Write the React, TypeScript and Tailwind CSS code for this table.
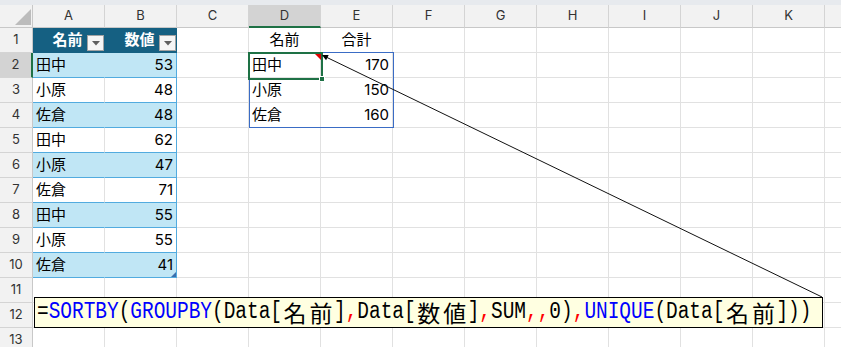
import React from "react";

const cols = ["A", "B", "C", "D", "E", "F", "G", "H", "I", "J", "K"];

const data: [string, number][] = [
  ["田中", 53],
  ["小原", 48],
  ["佐倉", 48],
  ["田中", 62],
  ["小原", 47],
  ["佐倉", 71],
  ["田中", 55],
  ["小原", 55],
  ["佐倉", 41],
];

const summary: [string, number][] = [
  ["田中", 170],
  ["小原", 150],
  ["佐倉", 160],
];

const cellBase =
  "relative flex items-center px-[3px] border-r border-b border-[#e1e1e1] text-[15px] text-black whitespace-nowrap overflow-hidden";

type Seg = { t: string; c: "k" | "b" | "r" };

const formula: Seg[] = [
  { t: "=", c: "k" },
  { t: "SORTBY", c: "b" },
  { t: "(", c: "k" },
  { t: "GROUPBY", c: "b" },
  { t: "(Data[名前]", c: "k" },
  { t: ",", c: "r" },
  { t: "Data[数値]", c: "k" },
  { t: ",", c: "r" },
  { t: "SUM", c: "k" },
  { t: ",,", c: "r" },
  { t: "0)", c: "k" },
  { t: ",", c: "r" },
  { t: "UNIQUE", c: "b" },
  { t: "(Data[名前]))", c: "k" },
];

const segColor = {
  k: "text-black",
  b: "text-[#0000ff]",
  r: "text-[#ff0000]",
};

function FilterButton() {
  return (
    <div className="absolute right-0 top-[7px] w-[17px] h-[16px] bg-[#f5f5f5] border border-[#a3a3a3] flex items-center justify-center">
      <svg width="8" height="5" viewBox="0 0 8 5">
        <polygon points="0,0 8,0 4,4.5" fill="#5f5f5f" />
      </svg>
    </div>
  );
}

function FormulaText() {
  return (
    <div className="flex items-center">
      {formula.map((s, i) =>
        (s.t.match(/[\u3000-\u9fff]+|[^\u3000-\u9fff]+/g) || []).map((run, j) =>
          /[\u3000-\u9fff]/.test(run) ? (
            run.split("").map((ch, k) => (
              <span
                key={`${i}-${j}-${k}`}
                className={`inline-block w-[26px] text-center text-[23px] leading-none font-['Noto_Sans_CJK_JP',sans-serif] ${segColor[s.c]}`}
              >
                {ch}
              </span>
            ))
          ) : (
            <span
              key={`${i}-${j}`}
              className={`inline-block scale-y-125 text-[19.45px] leading-none font-['Liberation_Mono',monospace] ${segColor[s.c]}`}
            >
              {run}
            </span>
          )
        )
      )}
    </div>
  );
}

function renderCell(r: number, ci: number) {
  const key = `${r}-${ci}`;
  // table A1:B10
  if (ci <= 1 && r === 1) {
    return (
      <div
        key={key}
        className={`${cellBase} justify-center bg-[#156082] border-r-[#156082] border-b-[#156082] text-white font-bold`}
      >
        <span className="mr-[2px]">{ci === 0 ? "名前" : "数値"}</span>
        <FilterButton />
      </div>
    );
  }
  if (ci <= 1 && r >= 2 && r <= 10) {
    const [name, val] = data[r - 2];
    const band = r % 2 === 0;
    if (ci === 0) {
      return (
        <div
          key={key}
          className={`${cellBase} border-b-[#52abdf] ${
            band ? "bg-[#c0e6f5] border-r-[#c0e6f5]" : "bg-white"
          }`}
        >
          {name}
        </div>
      );
    }
    return (
      <div
        key={key}
        className={`${cellBase} justify-end border-r-[#52abdf] border-b-[#52abdf] ${
          band ? "bg-[#c0e6f5]" : "bg-white"
        }`}
      >
        {val}
        {r === 10 && (
          <svg className="absolute right-0 bottom-0" width="5" height="5" viewBox="0 0 5 5">
            <polygon points="5,0 5,5 0,5" fill="#3b6fae" />
          </svg>
        )}
      </div>
    );
  }
  // summary D1:E4
  if (r === 1 && (ci === 3 || ci === 4)) {
    return (
      <div key={key} className={`${cellBase} justify-center`}>
        {ci === 3 ? "名前" : "合計"}
      </div>
    );
  }
  if (r >= 2 && r <= 4 && (ci === 3 || ci === 4)) {
    const [name, val] = summary[r - 2];
    return (
      <div key={key} className={`${cellBase} ${ci === 4 ? "justify-end" : ""}`}>
        {ci === 3 ? name : val}
      </div>
    );
  }
  return <div key={key} className={cellBase} />;
}

export default function App() {
  const rows = Array.from({ length: 13 }, (_, i) => i + 1);

  return (
    <div className="relative w-[841px] h-[347px] overflow-hidden bg-white font-['Inter','Noto_Sans_CJK_JP',sans-serif]">
      <div className="h-[5px] bg-[#e7eaee]" />
      <div className="grid grid-cols-[33px_repeat(11,72px)_1fr] grid-rows-[23px_repeat(13,25px)]">
        {/* corner */}
        <div className="relative bg-[#f2f2f2] border-r border-b border-[#c8c8c8]">
          <svg className="absolute left-[15px] top-[4px]" width="16" height="16" viewBox="0 0 16 16">
            <polygon points="16,0 16,16 0,16" fill="#bcbcbc" />
          </svg>
        </div>
        {cols.map((c) => (
          <div
            key={c}
            className={`flex items-center justify-center text-[13px] text-[#333] border-r border-[#d4d4d4] ${
              c === "D"
                ? "bg-[#d3d3d3] border-b-2 border-b-[#1e7145]"
                : "bg-[#f2f2f2] border-b border-b-[#c8c8c8]"
            }`}
          >
            {c}
          </div>
        ))}
        <div className="bg-[#f2f2f2] border-b border-[#c8c8c8]" />

        {rows.map((r) => (
          <React.Fragment key={r}>
            <div
              className={`flex items-center justify-center text-[13px] text-[#333] border-b border-[#d4d4d4] ${
                r === 2
                  ? "bg-[#d3d3d3] border-r-2 border-r-[#1e7145]"
                  : "bg-[#f2f2f2] border-r border-r-[#c8c8c8]"
              }`}
            >
              {r}
            </div>
            {cols.map((_, ci) => renderCell(r, ci))}
            <div className="border-b border-[#e1e1e1]" />
          </React.Fragment>
        ))}
      </div>

      {/* spill range border */}
      <div className="absolute left-[249px] top-[52px] w-[145px] h-[76px] border border-[#3a6cc5] pointer-events-none" />
      {/* active cell D2 */}
      <div className="absolute left-[248px] top-[52px] w-[75px] h-[28px] border-2 border-[#1e7145] pointer-events-none" />
      <div className="absolute left-[319px] top-[76px] w-[6px] h-[6px] bg-[#1e7145] border border-white" />
      <svg className="absolute left-[315px] top-[54px]" width="6" height="6" viewBox="0 0 6 6">
        <polygon points="0,0 6,0 6,6" fill="#e00000" />
      </svg>

      {/* comment box */}
      <div className="absolute left-[34px] top-[297px] w-[789px] h-[31px] border border-black bg-[#ffffe1] flex items-center pl-[2px]">
        <FormulaText />
      </div>

      {/* leader line */}
      <svg className="absolute left-0 top-0 pointer-events-none" width="841" height="347" viewBox="0 0 841 347">
        <line x1="822" y1="297" x2="326" y2="57" stroke="#111" strokeWidth="1" />
        <polygon points="322,55 328.7,54.9 326.1,60.3" fill="#000" />
      </svg>
    </div>
  );
}
